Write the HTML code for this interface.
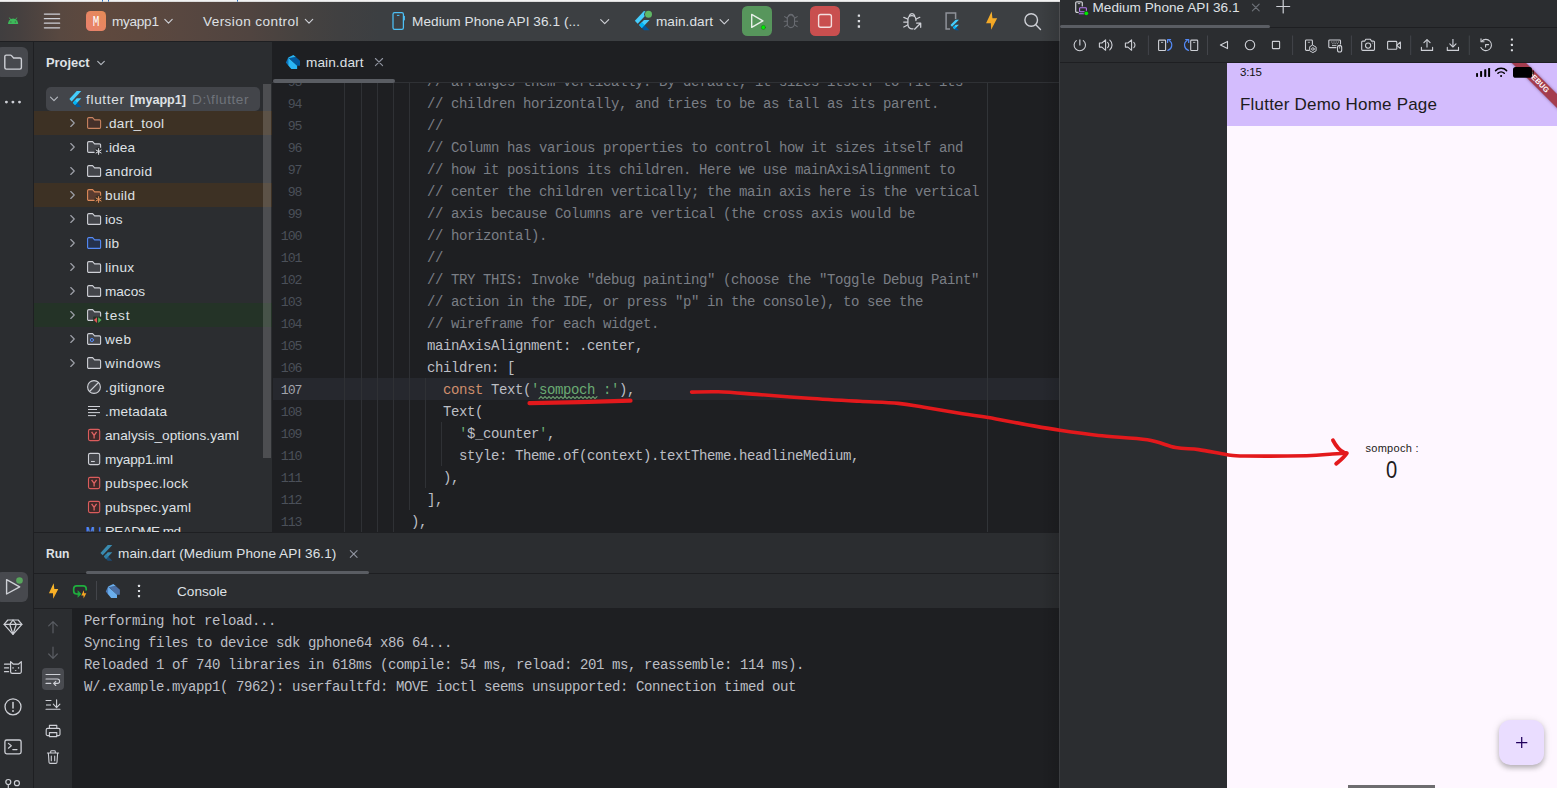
<!DOCTYPE html>
<html lang="en">
<head>
<meta charset="utf-8">
<title>myapp1 – main.dart</title>
<style>
*{box-sizing:border-box;margin:0;padding:0}
html,body{width:1557px;height:788px;overflow:hidden;background:#2b2d30}
body{position:relative;font-family:"Liberation Sans",sans-serif;font-size:13px;color:#dfe1e5}
.abs{position:absolute}
.t{position:absolute;white-space:pre;line-height:16px;height:16px;font-size:13.6px;color:#dfe1e5}
.b{font-weight:bold}
.mono{font-family:"Liberation Mono",monospace}
svg{position:absolute;overflow:visible}
#topstrip{left:0;top:0;width:1060px;height:2px;background:linear-gradient(#f4f4f4 0,#f0f0f0 55%,#c2c2c2 100%)}
#toolbar{left:0;top:2px;width:1060px;height:39px;background:linear-gradient(90deg,#403e3f 0px,#46403f 20px,#584840 60px,#5f493e 100px,#5c483e 140px,#584740 180px,#504440 250px,#464240 300px,#404041 340px,#3c3f42 380px,#3c3f42 100%)}
#tbline{left:0;top:41px;width:1060px;height:1px;background:#1e1f22}
#stripe{left:0;top:41px;width:33px;height:747px;background:#2b2d30}
#stripeb{left:33px;top:41px;width:1px;height:747px;background:#1e1f22}
#project{left:34px;top:41px;width:238px;height:491px;background:#2b2d30;overflow:hidden}
.row{position:absolute;left:0;width:238px;height:24px}
#editor{left:272px;top:41px;width:788px;height:491px;background:#1e1f22;overflow:hidden}
.cl{position:absolute;left:59px;height:22px;line-height:22px;white-space:pre;font-family:"Liberation Mono",monospace;font-size:14px;letter-spacing:-0.4014px;color:#bcbec4}
.ln{position:absolute;left:-0.5px;width:30px;text-align:right;height:22px;line-height:22px;font-family:"Liberation Mono",monospace;font-size:13.2px;letter-spacing:-1px;color:#4b5059;white-space:pre}
.cm{color:#7a7e85}.kw{color:#cf8e6d}.st{color:#6aab73}
.g{position:absolute;width:1px;background:#2f3135}
#hsep{left:34px;top:532px;width:1026px;height:1px;background:#1e1f22}
#run{left:34px;top:533px;width:1026px;height:255px;background:#2b2d30;overflow:hidden}
#console{left:38px;top:75px;width:988px;height:180px;background:#1e1f22}
.co{position:absolute;left:12px;height:22px;line-height:22px;white-space:pre;font-family:"Liberation Mono",monospace;font-size:14px;letter-spacing:-0.4014px;color:#bcbec4}
#device{left:1060px;top:0;width:497px;height:788px;background:#2b2d30;overflow:hidden}
#phone{left:167px;top:63px;width:330px;height:725px;background:#fef7ff;overflow:hidden;color:#1d1b20}
#appbar{left:0;top:0;width:330px;height:63px;background:#d3bcfd}
</style>
</head>
<body>
<div id="topstrip" class="abs"></div>
<div id="toolbar" class="abs"></div>
<svg width="1557" height="788" viewBox="0 0 1557 788" style="left:0;top:0;pointer-events:none" fill="none" stroke-linecap="round" stroke-linejoin="round" >
<rect x="102" y="0" width="1" height="1.6" fill="#2a6fc0" stroke="none"/><rect x="108" y="0" width="1" height="1.6" fill="#2a6fc0" stroke="none"/><rect x="237" y="0" width="1" height="1.6" fill="#2a6fc0" stroke="none"/>
<path d="M8 24.1 A5.1 5.6 0 0 1 18.2 24.1 Z" fill="#3dba5a" stroke="none"/><path d="M9.6 18 L10.8 20 M16.6 18 L15.4 20" stroke="#3dba5a" stroke-width="0.9"/><circle cx="10.9" cy="21.9" r="0.55" fill="#4a4341" stroke="none"/><circle cx="15.3" cy="21.9" r="0.55" fill="#4a4341" stroke="none"/>
<path d="M44.4 14.1 H59.6" stroke="#ced0d6" stroke-width="1.3"/>
<path d="M44.4 18.7 H59.6" stroke="#ced0d6" stroke-width="1.3"/>
<path d="M44.4 23.2 H59.6" stroke="#ced0d6" stroke-width="1.3"/>
<path d="M44.4 27.8 H59.6" stroke="#ced0d6" stroke-width="1.3"/>
<defs><linearGradient id="mg" x1="0" y1="1" x2="1" y2="0"><stop offset="0" stop-color="#e9806e"/><stop offset="1" stop-color="#e58b56"/></linearGradient></defs>
<rect x="86" y="11" width="20" height="20" rx="4.5" fill="url(#mg)" stroke="none"/>
<text x="96" y="25.9" text-anchor="middle" font-family="Liberation Mono,monospace" font-size="14.8" fill="#fff" stroke="none" textLength="6.6" lengthAdjust="spacingAndGlyphs">M</text>
<path d="M164.8 19.35 L168.5 23.05 L172.2 19.35" stroke="#ced0d6" stroke-width="1.15"/>
<path d="M305.3 19.35 L309 23.05 L312.7 19.35" stroke="#ced0d6" stroke-width="1.15"/>
<rect x="393" y="12.6" width="10.4" height="16.8" rx="1.6" stroke="#4dc0f5" stroke-width="1.25"/><path d="M397.3 15.4 H399" stroke="#4dc0f5" stroke-width="1"/><path d="M404.3 16.3 V19.8" stroke="#4dc0f5" stroke-width="1.2"/>
<path d="M600.7 19.6 L604.7 23.6 L608.7 19.6" stroke="#ced0d6" stroke-width="1.15"/>
<g transform="translate(633.1 11.1) scale(0.76 0.8)" stroke="none"><path d="M14.3 0 L2.3 12 L6 15.7 L21.7 0 Z" fill="#45cdfc"/><path d="M14.3 11.1 L7.9 17.5 L11.6 21.2 L21.7 11.1 Z" fill="#45cdfc"/><path d="M11.6 21.2 L14.3 24 L21.7 24 L15.3 17.5 Z" fill="#01579b"/><path d="M7.9 17.5 L11.6 13.8 L15.3 17.5 L11.6 21.2 Z" fill="#00b5f8"/></g>
<circle cx="648.5" cy="14.3" r="4.3" fill="#3c3f41" stroke="none"/><circle cx="648.5" cy="14.3" r="3.5" fill="#5fb865" stroke="none"/>
<path d="M720.1 19.7 L724.3 23.9 L728.5 19.7" stroke="#ced0d6" stroke-width="1.15"/>
<rect x="742" y="6" width="30" height="30" rx="5.5" fill="#57965c" stroke="none"/>
<path d="M751.7 14.4 V27.4 L762.9 20.9 Z" stroke="#e7efe8" stroke-width="1.4"/>
<circle cx="763.4" cy="27.4" r="2.9" fill="#57965c" stroke="none"/><circle cx="763.4" cy="27.4" r="2.1" fill="#00f000" stroke="#1c6b22" stroke-width="0.5"/>
<g stroke="#696c72" stroke-width="1.1"><path d="M787.3 18.6 A3.6 3.6 0 0 1 794.5 18.6 V23.6 A3.6 4 0 0 1 787.3 23.6 Z"/><path d="M788.6 16.6 A2.3 2.3 0 0 1 793.2 16.6"/><path d="M784.2 21.3 H787.3 M794.5 21.3 H797.6 M784.6 16.6 L787.3 18.3 M797.2 16.6 L794.5 18.3 M784.6 26.6 L787.3 24.6 M797.2 26.6 L794.5 24.6"/></g>
<rect x="810" y="6" width="30" height="30" rx="5.5" fill="#c94f4f" stroke="none"/>
<rect x="818.6" y="14.5" width="12.8" height="12.8" rx="2" stroke="#f3dede" stroke-width="1.4"/>
<rect x="857.75" y="14.55" width="2.3" height="2.3" rx="0.5" fill="#dfe1e5" stroke="none"/><rect x="857.75" y="19.95" width="2.3" height="2.3" rx="0.5" fill="#dfe1e5" stroke="none"/><rect x="857.75" y="25.35" width="2.3" height="2.3" rx="0.5" fill="#dfe1e5" stroke="none"/>
<g stroke="#ced0d6" stroke-width="1.25"><path d="M915.9 20.6 V19.5 A4 4 0 0 0 907.9 19.5 V24.6 A4 4.4 0 0 0 913 28.8"/><path d="M909.3 15.8 A2.8 2.8 0 0 1 914.7 15.8"/><path d="M903.8 17.4 L907.6 19 M903.7 22 H907.6 M903.8 27 L907.6 25 M916.2 19 L919.8 17.3"/><path d="M914.6 29.2 L920.6 23.3 M916.6 23.1 H920.7 V27.3"/></g>
<path d="M950 28.9 H946.1 V12.9 H955.6 V19" stroke="#8f9299" stroke-width="1.5" stroke-linejoin="miter" stroke-linecap="butt"/>
<g transform="translate(949.4 19.8) scale(0.44 0.44)" stroke="none"><path d="M14.3 0 L2.3 12 L6 15.7 L21.7 0 Z" fill="#45cdfc"/><path d="M14.3 11.1 L7.9 17.5 L11.6 21.2 L21.7 11.1 Z" fill="#45cdfc"/><path d="M11.6 21.2 L14.3 24 L21.7 24 L15.3 17.5 Z" fill="#01579b"/><path d="M7.9 17.5 L11.6 13.8 L15.3 17.5 L11.6 21.2 Z" fill="#00b5f8"/></g>
<defs><linearGradient id="bg" x1="0" y1="0" x2="0" y2="1"><stop offset="0" stop-color="#f7b32e"/><stop offset="1" stop-color="#f0a020"/></linearGradient></defs>
<path d="M991.65 11.5 L986.05 23.3 L990.85 23.3 L991.15 29.7 L997.15 18.2 L992.45 18.2 Z" fill="url(#bg)" stroke="none"/>
<circle cx="1031.2" cy="20" r="6.3" stroke="#ced0d6" stroke-width="1.4"/><path d="M1035.8 24.7 L1040.5 29.4" stroke="#ced0d6" stroke-width="1.4"/>
</svg>
<span class="t" style="left:112px;top:14px;letter-spacing:-0.28px">myapp1</span>
<span class="t" style="left:203px;top:14px;letter-spacing:0.4px">Version control</span>
<span class="t" style="left:412px;top:14px;letter-spacing:0.07px">Medium Phone API 36.1 (...</span>
<span class="t" style="left:656px;top:14px;letter-spacing:0.04px">main.dart</span>
<div id="stripe" class="abs"></div>
<div id="stripeb" class="abs"></div>
<svg width="1557" height="788" viewBox="0 0 1557 788" style="left:0;top:0;pointer-events:none" fill="none" stroke-linecap="round" stroke-linejoin="round" >
<rect x="-4" y="47" width="32" height="30" rx="6" fill="#47494e" stroke="none"/>
<rect x="-4" y="572" width="32" height="30" rx="6" fill="#47494e" stroke="none"/>
<path d="M4.8 67.6 V56.6 A1.5 1.5 0 0 1 6.3 55.1 H10.4 A1.5 1.5 0 0 1 11.5 55.6 L13.6 58 H19.9 A1.5 1.5 0 0 1 21.4 59.5 V67.6 A1.5 1.5 0 0 1 19.9 69.1 H6.3 A1.5 1.5 0 0 1 4.8 67.6 Z" stroke="#ced0d6" stroke-width="1.4"/>
<circle cx="6.4" cy="102.1" r="1.45" fill="#ced0d6" stroke="none"/>
<circle cx="12.9" cy="102.1" r="1.45" fill="#ced0d6" stroke="none"/>
<circle cx="19.5" cy="102.1" r="1.45" fill="#ced0d6" stroke="none"/>
<path d="M6.6 579.7 V594 L19.7 586.8 Z" stroke="#ced0d6" stroke-width="1.4"/>
<circle cx="19.5" cy="580.5" r="4.3" fill="#47494e" stroke="none"/><circle cx="19.5" cy="580.5" r="3.3" fill="#57a65c" stroke="none"/>
<g stroke="#ced0d6" stroke-width="1.2"><path d="M7.8 620 H18.2 L21.9 624.3 L13 634.4 L4.1 624.3 Z"/><path d="M4.1 624.3 H21.9 M9.7 624.3 L13 634.2 L16.3 624.3 M9.7 624.3 L13 620 L16.3 624.3"/></g>
<g stroke="#ced0d6" stroke-width="1.2"><path d="M10.6 661.6 L13.4 664.2 H18.4 L21.3 661.6 V671.8 A1.6 1.6 0 0 1 19.7 673.4 H12.2 A1.6 1.6 0 0 1 10.6 671.8 Z"/><path d="M4.5 664.2 H9.6 M4.5 667.9 H8.6 M4.5 671.7 H8.6"/></g>
<rect x="12.4" y="667.2" width="1.3" height="1.4" fill="#ced0d6" stroke="none"/><rect x="17.9" y="667.2" width="1.3" height="1.4" fill="#ced0d6" stroke="none"/><path d="M14.7 670 H16.7 L15.7 671.2 Z" fill="#ced0d6" stroke="none"/>
<circle cx="13" cy="706.8" r="8" stroke="#ced0d6" stroke-width="1.3"/><path d="M13 702.4 V707.9" stroke="#ced0d6" stroke-width="1.5"/><circle cx="13" cy="711" r="0.95" fill="#ced0d6" stroke="none"/>
<rect x="4.9" y="740" width="16.2" height="13.8" rx="1.8" stroke="#ced0d6" stroke-width="1.3"/><path d="M8.4 743.4 L11.3 745.8 L8.4 748.2 M12.8 749.6 H17" stroke="#ced0d6" stroke-width="1.2"/>
<circle cx="8.3" cy="782" r="2.5" stroke="#ced0d6" stroke-width="1.2"/><circle cx="16.9" cy="783.2" r="2.5" stroke="#ced0d6" stroke-width="1.2"/><path d="M8.3 784.6 V790" stroke="#ced0d6" stroke-width="1.2"/>
</svg>
<div id="project" class="abs">
<div class="row" style="top:70px;background:#3d3124"></div>
<div class="row" style="top:142px;background:#3d3124"></div>
<div class="row" style="top:262px;background:#243327"></div>
<div class="abs" style="left:12px;top:46px;width:214px;height:24px;border-radius:5px;background:#43454a"></div>
</div>
<span class="t b" style="left:46px;top:55px;transform:scaleX(0.946);transform-origin:0 50%">Project</span>
<span class="t" style="left:86px;top:92px;letter-spacing:0.67px">flutter</span>
<span class="t b" style="left:129.5px;top:92px;transform:scaleX(0.927);transform-origin:0 50%">[myapp1]</span>
<span class="t" style="left:192px;top:92px;color:#6f737a;letter-spacing:0.57px">D:\flutter</span>
<span class="t" style="left:105px;top:116px;letter-spacing:0.26px">.dart_tool</span>
<span class="t" style="left:105px;top:140px;letter-spacing:0.13px">.idea</span>
<span class="t" style="left:105px;top:164px;letter-spacing:0.27px">android</span>
<span class="t" style="left:105px;top:188px;letter-spacing:0.32px">build</span>
<span class="t" style="left:105px;top:212px;letter-spacing:0.05px">ios</span>
<span class="t" style="left:105px;top:236px;letter-spacing:0.2px">lib</span>
<span class="t" style="left:105px;top:260px;letter-spacing:0.26px">linux</span>
<span class="t" style="left:105px;top:284px;letter-spacing:-0.01px">macos</span>
<span class="t" style="left:105px;top:308px;letter-spacing:0.86px">test</span>
<span class="t" style="left:105px;top:332px;letter-spacing:0.53px">web</span>
<span class="t" style="left:105px;top:356px;letter-spacing:0.56px">windows</span>
<span class="t" style="left:105px;top:380px;letter-spacing:0.4px">.gitignore</span>
<span class="t" style="left:105px;top:404px;letter-spacing:0.19px">.metadata</span>
<span class="t" style="left:105px;top:428px;letter-spacing:0.05px">analysis_options.yaml</span>
<span class="t" style="left:105px;top:452px;letter-spacing:-0.17px">myapp1.iml</span>
<span class="t" style="left:105px;top:476px;letter-spacing:0.33px">pubspec.lock</span>
<span class="t" style="left:105px;top:500px;letter-spacing:0.19px">pubspec.yaml</span>
<span class="t" style="left:105px;top:524px;letter-spacing:-0.6px">README.md</span>
<svg width="1557" height="788" viewBox="0 0 1557 788" style="left:0;top:0;pointer-events:none" fill="none" stroke-linecap="round" stroke-linejoin="round" >
<path d="M97.7 61.35 L101 64.65 L104.3 61.35" stroke="#b4b8bf" stroke-width="1.15"/>
<path d="M50.5 97.15 L54 100.65 L57.5 97.15" stroke="#b4b8bf" stroke-width="1.15"/>
<g transform="translate(67.95 90.9) scale(0.615 0.67)" stroke="none"><path d="M14.3 0 L2.3 12 L6 15.7 L21.7 0 Z" fill="#45cdfc"/><path d="M14.3 11.1 L7.9 17.5 L11.6 21.2 L21.7 11.1 Z" fill="#45cdfc"/><path d="M11.6 21.2 L14.3 24 L21.7 24 L15.3 17.5 Z" fill="#01579b"/><path d="M7.9 17.5 L11.6 13.8 L15.3 17.5 L11.6 21.2 Z" fill="#00b5f8"/></g>
<path d="M70.75 119.5 L74.25 123 L70.75 126.5" stroke="#9da0a8" stroke-width="1.15"/>
<path d="M87.6 127.2 V118.8 A1.2 1.2 0 0 1 88.8 117.6 H92.6 L94.6 119.9 H99.4 A1.2 1.2 0 0 1 100.6 121.1 V127.2 A1.2 1.2 0 0 1 99.4 128.4 H88.8 A1.2 1.2 0 0 1 87.6 127.2 Z" stroke="#c98360" fill="#45302a" stroke-width="1.1"/>
<path d="M70.75 143.5 L74.25 147 L70.75 150.5" stroke="#9da0a8" stroke-width="1.15"/>
<path d="M87.6 151.2 V142.8 A1.2 1.2 0 0 1 88.8 141.6 H92.6 L94.6 143.9 H99.4 A1.2 1.2 0 0 1 100.6 145.1 V151.2 A1.2 1.2 0 0 1 99.4 152.4 H88.8 A1.2 1.2 0 0 1 87.6 151.2 Z" stroke="#ced0d6" fill="#43454a" stroke-width="1.1"/>
<circle cx="98.6" cy="151.5" r="4.2" fill="#2b2d30" stroke="none"/>
<path d="M98.6 148.6 L98.6 154.4 M96.0885 150.05 L101.111 152.95 M101.111 150.05 L96.0885 152.95 " stroke="#dfe1e5" stroke-width="1"/>
<path d="M70.75 167.5 L74.25 171 L70.75 174.5" stroke="#9da0a8" stroke-width="1.15"/>
<path d="M87.6 175.2 V166.8 A1.2 1.2 0 0 1 88.8 165.6 H92.6 L94.6 167.9 H99.4 A1.2 1.2 0 0 1 100.6 169.1 V175.2 A1.2 1.2 0 0 1 99.4 176.4 H88.8 A1.2 1.2 0 0 1 87.6 175.2 Z" stroke="#ced0d6" fill="#43454a" stroke-width="1.1"/>
<path d="M70.75 191.5 L74.25 195 L70.75 198.5" stroke="#9da0a8" stroke-width="1.15"/>
<path d="M87.6 199.2 V190.8 A1.2 1.2 0 0 1 88.8 189.6 H92.6 L94.6 191.9 H99.4 A1.2 1.2 0 0 1 100.6 193.1 V199.2 A1.2 1.2 0 0 1 99.4 200.4 H88.8 A1.2 1.2 0 0 1 87.6 199.2 Z" stroke="#de8a5a" fill="#5a3c30" stroke-width="1.1"/>
<circle cx="98.6" cy="199.5" r="4.2" fill="#3d3124" stroke="none"/>
<path d="M98.6 196.6 L98.6 202.4 M96.0885 198.05 L101.111 200.95 M101.111 198.05 L96.0885 200.95 " stroke="#e8935e" stroke-width="1"/>
<path d="M70.75 215.5 L74.25 219 L70.75 222.5" stroke="#9da0a8" stroke-width="1.15"/>
<path d="M87.6 223.2 V214.8 A1.2 1.2 0 0 1 88.8 213.6 H92.6 L94.6 215.9 H99.4 A1.2 1.2 0 0 1 100.6 217.1 V223.2 A1.2 1.2 0 0 1 99.4 224.4 H88.8 A1.2 1.2 0 0 1 87.6 223.2 Z" stroke="#ced0d6" fill="#43454a" stroke-width="1.1"/>
<path d="M70.75 239.5 L74.25 243 L70.75 246.5" stroke="#9da0a8" stroke-width="1.15"/>
<path d="M87.6 247.2 V238.8 A1.2 1.2 0 0 1 88.8 237.6 H92.6 L94.6 239.9 H99.4 A1.2 1.2 0 0 1 100.6 241.1 V247.2 A1.2 1.2 0 0 1 99.4 248.4 H88.8 A1.2 1.2 0 0 1 87.6 247.2 Z" stroke="#548af7" fill="#25324d" stroke-width="1.1"/>
<path d="M70.75 263.5 L74.25 267 L70.75 270.5" stroke="#9da0a8" stroke-width="1.15"/>
<path d="M87.6 271.2 V262.8 A1.2 1.2 0 0 1 88.8 261.6 H92.6 L94.6 263.9 H99.4 A1.2 1.2 0 0 1 100.6 265.1 V271.2 A1.2 1.2 0 0 1 99.4 272.4 H88.8 A1.2 1.2 0 0 1 87.6 271.2 Z" stroke="#ced0d6" fill="#43454a" stroke-width="1.1"/>
<path d="M70.75 287.5 L74.25 291 L70.75 294.5" stroke="#9da0a8" stroke-width="1.15"/>
<path d="M87.6 295.2 V286.8 A1.2 1.2 0 0 1 88.8 285.6 H92.6 L94.6 287.9 H99.4 A1.2 1.2 0 0 1 100.6 289.1 V295.2 A1.2 1.2 0 0 1 99.4 296.4 H88.8 A1.2 1.2 0 0 1 87.6 295.2 Z" stroke="#ced0d6" fill="#43454a" stroke-width="1.1"/>
<path d="M70.75 311.5 L74.25 315 L70.75 318.5" stroke="#9da0a8" stroke-width="1.15"/>
<path d="M87.6 319.2 V310.8 A1.2 1.2 0 0 1 88.8 309.6 H92.6 L94.6 311.9 H99.4 A1.2 1.2 0 0 1 100.6 313.1 V319.2 A1.2 1.2 0 0 1 99.4 320.4 H88.8 A1.2 1.2 0 0 1 87.6 319.2 Z" stroke="#ced0d6" fill="#43454a" stroke-width="1.1"/>
<rect x="93.2" y="316.6" width="9" height="7" fill="#243327" stroke="none"/>
<path d="M97 317.2 V322.9 L93.9 320 Z" fill="#e05555" stroke="none"/><path d="M98.2 317.2 V322.9 L101.5 320 Z" fill="#4fae55" stroke="none"/>
<path d="M70.75 335.5 L74.25 339 L70.75 342.5" stroke="#9da0a8" stroke-width="1.15"/>
<path d="M87.6 343.2 V334.8 A1.2 1.2 0 0 1 88.8 333.6 H92.6 L94.6 335.9 H99.4 A1.2 1.2 0 0 1 100.6 337.1 V343.2 A1.2 1.2 0 0 1 99.4 344.4 H88.8 A1.2 1.2 0 0 1 87.6 343.2 Z" stroke="#ced0d6" fill="#43454a" stroke-width="1.1"/>
<circle cx="91.9" cy="340" r="1.6" stroke="#548af7" stroke-width="1"/>
<path d="M70.75 359.5 L74.25 363 L70.75 366.5" stroke="#9da0a8" stroke-width="1.15"/>
<path d="M87.6 367.2 V358.8 A1.2 1.2 0 0 1 88.8 357.6 H92.6 L94.6 359.9 H99.4 A1.2 1.2 0 0 1 100.6 361.1 V367.2 A1.2 1.2 0 0 1 99.4 368.4 H88.8 A1.2 1.2 0 0 1 87.6 367.2 Z" stroke="#ced0d6" fill="#43454a" stroke-width="1.1"/>
<circle cx="94" cy="387" r="6.4" stroke="#ced0d6" fill="#43454a" stroke-width="1.1"/><path d="M89.5 391.5 L98.5 382.5" stroke="#ced0d6" stroke-width="1.1"/>
<path d="M88 406.5 H100" stroke="#ced0d6" stroke-width="1.05" stroke-linecap="butt"/>
<path d="M88 409.5 H97" stroke="#ced0d6" stroke-width="1.05" stroke-linecap="butt"/>
<path d="M88 412.6 H100" stroke="#ced0d6" stroke-width="1.05" stroke-linecap="butt"/>
<path d="M88 415.6 H96" stroke="#ced0d6" stroke-width="1.05" stroke-linecap="butt"/>
<rect x="88.5" y="429.4" width="11.2" height="11.2" rx="1.6" stroke="#db5c5c" fill="#402929" stroke-width="1.1"/>
<path d="M91.6 431.8 L94.1 435.3 L96.6 431.8 M94.1 435.3 V438.4" stroke="#e06464" stroke-width="1.3" stroke-linecap="butt"/>
<rect x="88.5" y="453.4" width="11.2" height="11.2" rx="1.6" stroke="#ced0d6" fill="#43454a" stroke-width="1.1"/><path d="M91 461.5 H94.8" stroke="#ced0d6" stroke-width="1.1" stroke-linecap="butt"/>
<rect x="88.5" y="477.4" width="11.2" height="11.2" rx="1.6" stroke="#db5c5c" fill="#402929" stroke-width="1.1"/>
<path d="M91.6 479.8 L94.1 483.3 L96.6 479.8 M94.1 483.3 V486.4" stroke="#e06464" stroke-width="1.3" stroke-linecap="butt"/>
<rect x="88.5" y="501.4" width="11.2" height="11.2" rx="1.6" stroke="#db5c5c" fill="#402929" stroke-width="1.1"/>
<path d="M91.6 503.8 L94.1 507.3 L96.6 503.8 M94.1 507.3 V510.4" stroke="#e06464" stroke-width="1.3" stroke-linecap="butt"/>
<g clip-path="inset(0 0 0 0)"><text x="86" y="535.2" font-family="Liberation Sans,sans-serif" font-weight="bold" font-size="10.5" fill="#548af7" stroke="none" clip-path="url(#cpmd)">M<tspan x="95.6" font-family="DejaVu Sans,sans-serif">↓</tspan></text></g>
<defs><clipPath id="cpmd"><rect x="80" y="520" width="30" height="11.6"/></clipPath></defs>
</svg>
<div class="abs" style="left:263px;top:84px;width:8px;height:374px;background:rgba(255,255,255,0.16)"></div>
<div id="editor" class="abs">
<div class="abs" style="left:1px;top:337px;width:787px;height:22px;background:#26282e"></div>
<div class="g" style="left:72px;top:42px;height:449px"></div>
<div class="g" style="left:89px;top:42px;height:449px"></div>
<div class="g" style="left:105px;top:42px;height:449px"></div>
<div class="g" style="left:121px;top:42px;height:449px"></div>
<div class="g" style="left:137px;top:42px;height:427px"></div>
<div class="g" style="left:153px;top:337px;height:110px"></div>
<div class="g" style="left:169px;top:381px;height:44px"></div>
<div class="g" style="left:715px;top:42px;height:449px;background:#313438"></div>
<div class="cl" style="top:30px"><span class="cm">            // arranges them vertically. By default, it sizes itself to fit its</span></div>
<div class="ln" style="top:31px">93</div>
<div class="cl" style="top:52px"><span class="cm">            // children horizontally, and tries to be as tall as its parent.</span></div>
<div class="ln" style="top:53px">94</div>
<div class="cl" style="top:74px"><span class="cm">            //</span></div>
<div class="ln" style="top:75px">95</div>
<div class="cl" style="top:96px"><span class="cm">            // Column has various properties to control how it sizes itself and</span></div>
<div class="ln" style="top:97px">96</div>
<div class="cl" style="top:118px"><span class="cm">            // how it positions its children. Here we use mainAxisAlignment to</span></div>
<div class="ln" style="top:119px">97</div>
<div class="cl" style="top:140px"><span class="cm">            // center the children vertically; the main axis here is the vertical</span></div>
<div class="ln" style="top:141px">98</div>
<div class="cl" style="top:162px"><span class="cm">            // axis because Columns are vertical (the cross axis would be</span></div>
<div class="ln" style="top:163px">99</div>
<div class="cl" style="top:184px"><span class="cm">            // horizontal).</span></div>
<div class="ln" style="top:185px">100</div>
<div class="cl" style="top:206px"><span class="cm">            //</span></div>
<div class="ln" style="top:207px">101</div>
<div class="cl" style="top:228px"><span class="cm">            // TRY THIS: Invoke "debug painting" (choose the "Toggle Debug Paint"</span></div>
<div class="ln" style="top:229px">102</div>
<div class="cl" style="top:250px"><span class="cm">            // action in the IDE, or press "p" in the console), to see the</span></div>
<div class="ln" style="top:251px">103</div>
<div class="cl" style="top:272px"><span class="cm">            // wireframe for each widget.</span></div>
<div class="ln" style="top:273px">104</div>
<div class="cl" style="top:294px">            mainAxisAlignment: .center,</div>
<div class="ln" style="top:295px">105</div>
<div class="cl" style="top:316px">            children: [</div>
<div class="ln" style="top:317px">106</div>
<div class="cl" style="top:338px">              <span class="kw">const</span> Text(<span class="st">'</span><span class="st typo">sompoch</span><span class="st"> :'</span>),</div>
<div class="ln" style="top:339px;color:#a1a3ab">107</div>
<div class="cl" style="top:360px">              Text(</div>
<div class="ln" style="top:361px">108</div>
<div class="cl" style="top:382px">                <span class="st">'</span>$_counter<span class="st">'</span>,</div>
<div class="ln" style="top:383px">109</div>
<div class="cl" style="top:404px">                style: Theme.of(context).textTheme.headlineMedium,</div>
<div class="ln" style="top:405px">110</div>
<div class="cl" style="top:426px">              ),</div>
<div class="ln" style="top:427px">111</div>
<div class="cl" style="top:448px">            ],</div>
<div class="ln" style="top:449px">112</div>
<div class="cl" style="top:470px">          ),</div>
<div class="ln" style="top:471px">113</div>
<div class="abs" style="left:0;top:0;width:788px;height:42px;background:#1e1f22;border-bottom:1px solid #2f3135"></div>
<div class="abs" style="left:1px;top:38px;width:122px;height:4px;border-radius:2px;background:#5a5d63"></div>
</div>
<span class="t" style="left:306px;top:55px;letter-spacing:0.1px">main.dart</span>
<svg width="1557" height="788" viewBox="0 0 1557 788" style="left:0;top:0;pointer-events:none" fill="none" stroke-linecap="round" stroke-linejoin="round" >
<g transform="translate(285.8 54.7) scale(1)" stroke="none"><path d="M2.4 2.9 L7.6 0.2 L10.4 2.6 L3.3 3.5 Z" fill="#29b6f6"/><path d="M3.2 3.4 L10.3 2.5 L14.2 6 L14.2 11.1 L11.2 11.1 Z" fill="#02589d"/><path d="M2.3 2.9 L11.3 11.1 L11.3 14.3 L5.5 14.3 L2.3 10.6 Z" fill="#29b6f6"/><path d="M0.1 7.9 L2.4 2.9 L2.4 10.7 Z" fill="#0d74bd"/></g>
<path d="M375.4 58.5 L382.6 65.7 M382.6 58.5 L375.4 65.7" stroke="#9094a0" stroke-width="1.1"/>
<path d="M539 398.6 L541 396.6 L543 398.6 L545 396.6 L547 398.6 L549 396.6 L551 398.6 L553 396.6 L555 398.6 L557 396.6 L559 398.6 L561 396.6 L563 398.6 L565 396.6 L567 398.6 L569 396.6 L571 398.6 L573 396.6 L575 398.6 L577 396.6 L579 398.6 L581 396.6 L583 398.6 L585 396.6 L587 398.6 L589 396.6 L591 398.6 L593 396.6 L595 398.6 L597 396.6" stroke="#6ea672" stroke-width="1.05" stroke-linejoin="miter"/>
</svg>
<div id="hsep" class="abs"></div>
<div id="run" class="abs">
<div class="abs" style="left:0;top:40px;width:1026px;height:1px;background:#1e1f22"></div>
<div class="abs" style="left:52px;top:38px;width:283px;height:3px;border-radius:2px;background:#5a5d63"></div>
<div class="abs" style="left:62px;top:48px;width:1px;height:19px;background:#43454a"></div>
<div class="abs" style="left:0;top:75px;width:40px;height:1px;background:#1e1f22"></div>
<div id="console" class="abs">
<div class="co" style="top:2px">Performing hot reload...</div>
<div class="co" style="top:24px">Syncing files to device sdk gphone64 x86 64...</div>
<div class="co" style="top:46px">Reloaded 1 of 740 libraries in 618ms (compile: 54 ms, reload: 201 ms, reassemble: 114 ms).</div>
<div class="co" style="top:68px">W/.example.myapp1( 7962): userfaultfd: MOVE ioctl seems unsupported: Connection timed out</div>
</div>
<div class="abs" style="left:8px;top:135px;width:22px;height:22px;border-radius:4px;background:#494b50"></div>
</div>
<span class="t b" style="left:46px;top:546px;transform:scaleX(0.889);transform-origin:0 50%">Run</span>
<span class="t" style="left:118px;top:546px;letter-spacing:0.07px">main.dart (Medium Phone API 36.1)</span>
<span class="t" style="left:177px;top:584px;letter-spacing:0.02px">Console</span>
<svg width="1557" height="788" viewBox="0 0 1557 788" style="left:0;top:0;pointer-events:none" fill="none" stroke-linecap="round" stroke-linejoin="round" >
<g transform="translate(99.05 545) scale(0.61 0.66)" stroke="none"><path d="M14.3 0 L2.3 12 L6 15.7 L21.7 0 Z" fill="#3a8bb0"/><path d="M14.3 11.1 L7.9 17.5 L11.6 21.2 L21.7 11.1 Z" fill="#3a8bb0"/><path d="M11.6 21.2 L14.3 24 L21.7 24 L15.3 17.5 Z" fill="#1d4d75"/><path d="M7.9 17.5 L11.6 13.8 L15.3 17.5 L11.6 21.2 Z" fill="#2f7fa6"/></g>
<path d="M350.3 550.6 L357.1 557.4 M357.1 550.6 L350.3 557.4" stroke="#9094a0" stroke-width="1.1"/>
<defs><linearGradient id="bg2" x1="0" y1="0" x2="0" y2="1"><stop offset="0" stop-color="#fcbc2c"/><stop offset="1" stop-color="#f5a623"/></linearGradient></defs>
<path d="M53.6422 583.353 L48.92 593.303 L52.9676 593.303 L53.2205 598.7 L58.28 589.003 L54.3168 589.003 Z" fill="url(#bg2)" stroke="none"/>
<path d="M86.2 590.4 V588.8 A3 3 0 0 0 83.2 585.8 H76.7 A3 3 0 0 0 73.7 588.8 V591 A3 3 0 0 0 76.7 594 H79" stroke="#1fae3e" stroke-width="1.7" stroke-linecap="butt"/>
<path d="M78.2 591 L81 594 L78.2 597 Z" fill="#1fae3e" stroke="#1fae3e" stroke-width="0.6"/>
<path d="M83.8227 590.136 L81.28 595.494 L83.4595 595.494 L83.5957 598.4 L86.32 593.178 L84.1859 593.178 Z" fill="#f5a623" stroke="none"/>
<g transform="translate(105.7 583.7) scale(1)" stroke="none"><path d="M2.4 2.9 L7.6 0.2 L10.4 2.6 L3.3 3.5 Z" fill="#6aaeed"/><path d="M3.2 3.4 L10.3 2.5 L14.2 6 L14.2 11.1 L11.2 11.1 Z" fill="#4a6fa5"/><path d="M2.3 2.9 L11.3 11.1 L11.3 14.3 L5.5 14.3 L2.3 10.6 Z" fill="#6aaeed"/><path d="M0.1 7.9 L2.4 2.9 L2.4 10.7 Z" fill="#4f7fbd"/></g>
<rect x="137.95" y="584.85" width="2.1" height="2.1" rx="0.5" fill="#dfe1e5" stroke="none"/><rect x="137.95" y="589.95" width="2.1" height="2.1" rx="0.5" fill="#dfe1e5" stroke="none"/><rect x="137.95" y="595.05" width="2.1" height="2.1" rx="0.5" fill="#dfe1e5" stroke="none"/>
<path d="M53 621.8 V632.8 M48.7 625.9 L53 621.6 L57.3 625.9" stroke="#5a5d63" stroke-width="1.2"/>
<path d="M53 647 V658 M48.7 654 L53 658.3 L57.3 654" stroke="#5a5d63" stroke-width="1.2"/>
<g stroke="#ced0d6" stroke-width="1.1"><path d="M46 674.5 H60 M46 679 H57.4 A2.2 2.2 0 0 1 57.4 683.4 H54 M46 683.4 H50.8 M55.8 681.3 L53.6 683.4 L55.8 685.5"/></g>
<g stroke="#ced0d6" stroke-width="1.1"><path d="M46 700.5 H51 M46 709.3 H60 M56.6 699.8 V707.3 M53.3 704.2 L56.6 707.6 L59.9 704.2"/><path d="M46 705 H51" stroke="#9a9da3" stroke-width="1.6" stroke-linecap="butt"/></g>
<g stroke="#ced0d6" stroke-width="1.1"><path d="M49.4 728.3 V725.4 H56.8 V728.3"/><path d="M49.4 735.6 H47.6 A1.4 1.4 0 0 1 46.2 734.2 V729.8 A1.4 1.4 0 0 1 47.6 728.4 H58.6 A1.4 1.4 0 0 1 60 729.8 V734.2 A1.4 1.4 0 0 1 58.6 735.6 H56.8"/><rect x="49.4" y="732.6" width="7.4" height="4"/></g>
<g stroke="#ced0d6" stroke-width="1.1"><path d="M47.4 753 H58.6 M50.7 752.8 V751.6 A0.9 0.9 0 0 1 51.6 750.7 H54.4 A0.9 0.9 0 0 1 55.3 751.6 V752.8 M48.4 753.2 L49 762.2 A1.3 1.3 0 0 0 50.3 763.4 H55.7 A1.3 1.3 0 0 0 57 762.2 L57.6 753.2 M51.3 756 V760.8 M54.7 756 V760.8"/></g>
</svg>
<div id="tbline" class="abs"></div><div class="abs" style="left:1041px;top:2px;width:18px;height:786px;background:linear-gradient(90deg,rgba(0,0,0,0),rgba(0,0,0,.13))"></div><div class="abs" style="left:1059px;top:2px;width:1px;height:39px;background:#4d4e50"></div><div class="abs" style="left:1059px;top:41px;width:1px;height:747px;background:#3b3d40"></div>
<div id="device" class="abs">
<div class="abs" style="left:0;top:27px;width:497px;height:1px;background:#1e1f22"></div>
<div class="abs" style="left:0;top:25px;width:210px;height:3px;border-radius:2px;background:#5a5d63"></div>
<div class="abs" style="left:0;top:62px;width:497px;height:1px;background:#1e1f22"></div>
<div id="phone" class="abs"><div id="appbar" class="abs"></div>
<div class="abs" style="left:260.8px;top:13.65px;width:100px;height:10.1px;background:#a43c4e;transform:rotate(45deg);transform-origin:50% 50%;box-shadow:0 0 3px rgba(60,20,60,.55);color:#fff;font-size:7.5px;font-weight:bold;line-height:10.1px;text-align:center;letter-spacing:0.05px">DEBUG</div>
<div class="abs" style="left:272px;top:657px;width:45px;height:45px;border-radius:11.5px;background:#eaddff;box-shadow:0 3px 5px rgba(0,0,0,.22),0 1px 8px rgba(0,0,0,.12)"></div>
<div class="abs" style="left:121px;top:722px;width:87px;height:4px;background:#6e6d70"></div>
</div></div>
<span class="t" style="left:1092.5px;top:0px;letter-spacing:0.02px">Medium Phone API 36.1</span>
<span class="t" style="left:1240px;top:94.3px;font-size:17px;color:#1d1b20;line-height:22px;height:22px;letter-spacing:0.2px">Flutter Demo Home Page</span>
<span class="t" style="left:1240px;top:65.3px;font-size:11.5px;color:#111;line-height:14px;height:14px;letter-spacing:-0.13px">3:15</span>
<span class="t" style="left:1365.5px;top:441px;font-size:11px;color:#1d1b20;line-height:14px;height:14px;letter-spacing:0.28px">sompoch :</span>
<span class="t" style="left:1385.4px;top:457.2px;font-size:23.4px;color:#1d1b20;line-height:26px;height:26px;transform:scaleX(.86);transform-origin:50% 50%">0</span>
<svg width="1557" height="788" viewBox="0 0 1557 788" style="left:0;top:0;pointer-events:none" fill="none" stroke-linecap="round" stroke-linejoin="round" >
<path d="M1078.2 12.3 H1076.8 A1.1 1.1 0 0 1 1075.7 11.2 V2.9 A1.1 1.1 0 0 1 1076.8 1.8 H1081.2 A1.1 1.1 0 0 1 1082.3 2.9 V6" stroke="#ced0d6" stroke-width="1.2"/><path d="M1078.2 3.6 H1079.8" stroke="#ced0d6" stroke-width="0.9"/>
<rect x="1079.6" y="7.8" width="6.8" height="4" rx="0.8" stroke="#b57bf0" stroke-width="1.1"/><path d="M1079.2 13.7 H1084.5" stroke="#b57bf0" stroke-width="1.1"/>
<circle cx="1086.3" cy="13.3" r="2.5" fill="#2b2d30" stroke="none"/><circle cx="1086.3" cy="13.3" r="1.9" fill="#00e800" stroke="none"/>
<path d="M1252.4 4.1 L1259.2 10.9 M1259.2 4.1 L1252.4 10.9" stroke="#6f737a" stroke-width="1.1"/>
<path d="M1276.7 6.5 H1289.7 M1283.2 0 V13" stroke="#ced0d6" stroke-width="1.2"/>
<path d="M1076.3 40.6 A5.7 5.7 0 1 0 1083.3 40.6" stroke="#ced0d6" stroke-width="1.1"/><path d="M1079.8 39.5 V45.6" stroke="#a4a7ad" stroke-width="1.6" stroke-linecap="butt"/>
<path d="M1099.4 43 H1101.9 L1105.6 39.8 V50.3 L1101.9 47.1 H1099.4 Z" stroke="#ced0d6" stroke-width="1.1"/>
<path d="M1107.6 42.4 A3.6 3.6 0 0 1 1107.6 47.7 M1109.8 40.2 A6.4 6.4 0 0 1 1109.8 49.9" stroke="#ced0d6" stroke-width="1.1"/>
<path d="M1125.4 43 H1127.9 L1131.6 39.8 V50.3 L1127.9 47.1 H1125.4 Z" stroke="#ced0d6" stroke-width="1.1"/>
<path d="M1133.8 42.4 A3.6 3.6 0 0 1 1133.8 47.7" stroke="#ced0d6" stroke-width="1.1"/>
<path d="M1148.4 35.5 V55" stroke="#43454a" stroke-width="1" stroke-linecap="butt"/>
<path d="M1207.5 35.5 V55" stroke="#43454a" stroke-width="1" stroke-linecap="butt"/>
<path d="M1292.6 35.5 V55" stroke="#43454a" stroke-width="1" stroke-linecap="butt"/>
<path d="M1351.4 35.5 V55" stroke="#43454a" stroke-width="1" stroke-linecap="butt"/>
<path d="M1410.7 35.5 V55" stroke="#43454a" stroke-width="1" stroke-linecap="butt"/>
<path d="M1469.3 35.5 V55" stroke="#43454a" stroke-width="1" stroke-linecap="butt"/>
<rect x="1158.6" y="40.1" width="7" height="10.4" rx="0.8" stroke="#ced0d6" stroke-width="1.1"/><path d="M1161.4 42.4 H1162.8" stroke="#ced0d6" stroke-width="0.8"/>
<path d="M1167.8 50.4 A5.4 5.4 0 0 0 1169.2 40.6" stroke="#548af7" stroke-width="1.2"/><path d="M1167.6 39.6 H1170.6 M1167.6 39.6 V42.4" stroke="#548af7" stroke-width="1.2"/>
<rect x="1190.7" y="40.1" width="7" height="10.4" rx="0.8" stroke="#ced0d6" stroke-width="1.1"/><path d="M1193.5 42.4 H1194.9" stroke="#ced0d6" stroke-width="0.8"/>
<path d="M1188.5 50.4 A5.4 5.4 0 0 1 1187.1 40.6" stroke="#548af7" stroke-width="1.2"/><path d="M1188.7 39.6 H1185.7 M1188.7 39.6 V42.4" stroke="#548af7" stroke-width="1.2"/>
<path d="M1220.4 45 L1227.5 41.4 V48.6 Z" stroke="#ced0d6" stroke-width="1.1"/>
<circle cx="1250" cy="45" r="4.7" stroke="#ced0d6" stroke-width="1.1"/>
<rect x="1272.4" y="41.4" width="7.2" height="7.2" rx="0.5" stroke="#ced0d6" stroke-width="1.1"/>
<path d="M1308.6 50.4 H1306.4 A0.9 0.9 0 0 1 1305.5 49.5 V40.9 A0.9 0.9 0 0 1 1306.4 40 H1311.5 A0.9 0.9 0 0 1 1312.4 40.9 V44.4" stroke="#ced0d6" stroke-width="1.1"/><path d="M1308.2 42.3 H1309.6" stroke="#ced0d6" stroke-width="0.8"/>
<path d="M1312.9 45.3 L1316.1 47.1 V50.8 L1312.9 52.6 L1309.7 50.8 V47.1 Z" stroke="#ced0d6" stroke-width="1"/><circle cx="1312.9" cy="49" r="1.3" stroke="#ced0d6" stroke-width="0.9"/>
<path d="M1336 47.6 H1329.7 A0.9 0.9 0 0 1 1328.8 46.7 V40.9 A0.9 0.9 0 0 1 1329.7 40 H1339.6 A0.9 0.9 0 0 1 1340.5 40.9 V44" stroke="#ced0d6" stroke-width="1.1"/>
<path d="M1331.3 42 H1332.3 M1333.5 42 H1334.5 M1335.7 42 H1336.7 M1337.9 42 H1338.9 M1332.4 43.7 H1333.4 M1334.6 43.7 H1335.6 M1336.8 43.7 H1337.8 M1332 45.6 H1336.5" stroke="#ced0d6" stroke-width="0.9" stroke-linecap="butt"/>
<rect x="1337.5" y="45.4" width="4.2" height="6.6" rx="2.1" fill="#2b2d30" stroke="#ced0d6" stroke-width="1.1"/><path d="M1339.6 46.6 V48.2" stroke="#ced0d6" stroke-width="0.8"/>
<path d="M1362.8 41.1 H1364.8 L1365.8 39.3 H1370.4 L1371.4 41.1 H1373.4 A1.1 1.1 0 0 1 1374.5 42.2 V49.3 A1.1 1.1 0 0 1 1373.4 50.4 H1362.8 A1.1 1.1 0 0 1 1361.7 49.3 V42.2 A1.1 1.1 0 0 1 1362.8 41.1 Z" stroke="#ced0d6" stroke-width="1.1"/><circle cx="1368.1" cy="45.6" r="2.6" stroke="#ced0d6" stroke-width="1.1"/><circle cx="1372.7" cy="43" r="0.5" fill="#ced0d6" stroke="none"/>
<rect x="1387.6" y="41.4" width="9.2" height="7.8" rx="0.8" stroke="#ced0d6" stroke-width="1.1"/><path d="M1396.8 45.3 L1400.4 42 V48.6 Z" stroke="#ced0d6" stroke-width="1.1"/>
<path d="M1421.4 47.4 V50.4 H1432.6 V47.4" stroke="#ced0d6" stroke-width="1.1"/><path d="M1427 39.8 V47.4" stroke="#9da0a8" stroke-width="1.6" stroke-linecap="butt"/><path d="M1423.9 42.7 L1427 39.6 L1430.1 42.7" stroke="#ced0d6" stroke-width="1.1"/>
<path d="M1447.3 47.4 V50.4 H1458.5 V47.4" stroke="#ced0d6" stroke-width="1.1"/><path d="M1452.9 39 V46.6" stroke="#9da0a8" stroke-width="1.6" stroke-linecap="butt"/><path d="M1449.8 43.9 L1452.9 47 L1456 43.9" stroke="#ced0d6" stroke-width="1.1"/>
<path d="M1481.6 41.4 A5.6 5.6 0 1 1 1480.9 47.6" stroke="#ced0d6" stroke-width="1.1"/><path d="M1481 38.8 V41.8 H1484" stroke="#ced0d6" stroke-width="1.1"/><path d="M1485.6 47 V44.6 H1488.6" stroke="#ced0d6" stroke-width="1.1"/>
<rect x="1510.85" y="38.45" width="2.1" height="2.1" rx="0.5" fill="#dfe1e5" stroke="none"/><rect x="1510.85" y="43.85" width="2.1" height="2.1" rx="0.5" fill="#dfe1e5" stroke="none"/><rect x="1510.85" y="49.15" width="2.1" height="2.1" rx="0.5" fill="#dfe1e5" stroke="none"/>
<rect x="1476.1" y="72.9" width="1.9" height="4" rx="0.6" fill="#000" stroke="none"/>
<rect x="1480.1" y="71.1" width="2" height="5.8" rx="0.6" fill="#000" stroke="none"/>
<rect x="1484.2" y="69.3" width="2.1" height="7.6" rx="0.6" fill="#000" stroke="none"/>
<rect x="1488.1" y="68" width="2" height="8.9" rx="0.6" fill="#000" stroke="none"/>
<path d="M1495.6 70.6 A7.8 7.8 0 0 1 1506.6 70.6 M1497.9 73.2 A4.6 4.6 0 0 1 1504.3 73.2" stroke="#000" stroke-width="1.5"/><circle cx="1501.1" cy="76" r="1.05" fill="#000" stroke="none"/>
<rect x="1513" y="67.1" width="19" height="10.7" rx="2.6" fill="#000" stroke="none"/><rect x="1532.4" y="70.3" width="1.3" height="4.3" rx="0.6" fill="#000" stroke="none"/>
<path d="M1516.1 742.5 H1527.3 M1521.7 736.9 V748.1" stroke="#21005d" stroke-width="1.25" stroke-linecap="butt"/>
</svg>
<svg id="annot" width="1557" height="788" style="left:0;top:0;pointer-events:none" fill="none" stroke="#e3191c" stroke-linecap="round" stroke-linejoin="round">
<path d="M691.6 392.1 C696.1 392.1 707.6 391.4 718.5 391.8 C729.4 392.2 742.0 393.3 757.0 394.4 C772.0 395.5 791.4 397.1 808.5 398.3 C825.6 399.5 844.8 400.5 859.8 401.3 C874.8 402.1 887.7 402.4 898.4 403.4 C909.1 404.4 913.3 405.6 924.0 407.3 C934.7 409.0 951.9 412.0 962.6 413.7 C973.3 415.4 977.6 415.7 988.3 417.5 C999.0 419.3 1014.8 422.6 1026.8 424.7 C1038.8 426.8 1048.0 428.5 1060.0 430.3 C1072.0 432.1 1084.0 433.9 1098.5 435.5 C1113.0 437.1 1134.5 437.8 1147.3 439.8 C1160.1 441.8 1167.0 445.9 1175.6 447.5 C1184.2 449.1 1190.1 448.4 1198.7 449.6 C1207.3 450.8 1219.3 453.6 1227.0 454.7 C1234.7 455.8 1231.7 455.8 1245.0 456.0 C1258.3 456.2 1292.0 456.0 1306.6 455.7 C1321.1 455.4 1325.6 454.4 1332.3 454.0 C1339.0 453.6 1344.1 453.3 1346.5 453.2" stroke-width="3.6"/>
<path d="M1333 440.3 C1335.5 445 1339.5 450.3 1344 452.6 L1346.8 453.2 C1344 457.5 1339.5 461 1336.2 463.8" stroke-width="3.9"/>
<path d="M529.5 403.2 Q580 402.5 630.5 400.7" stroke-width="4.2"/>
</svg>
</body>
</html>
